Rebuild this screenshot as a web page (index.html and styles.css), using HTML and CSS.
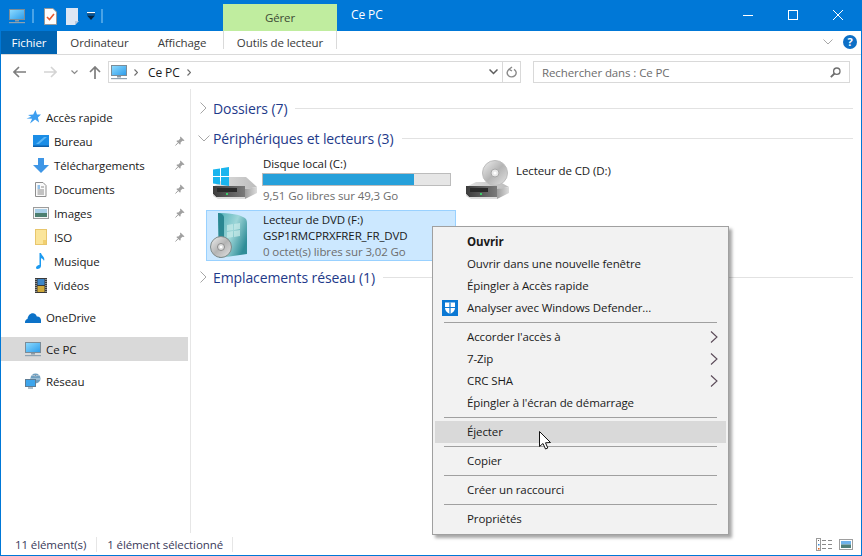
FILE: index.html
```html
<!DOCTYPE html>
<html lang="fr">
<head>
<meta charset="UTF-8">
<meta name="viewport" content="width=device-width, initial-scale=1.0">
<title>Ce PC</title>
<link rel="stylesheet" href="styles.css">
</head>
<body>

<!-- Shared icons -->
<svg class="defs" width="0" height="0">
  <defs>
    <linearGradient id="screen" x1="0" y1="0" x2="1" y2="1">
      <stop offset="0" stop-color="#8fdcff"/>
      <stop offset="1" stop-color="#2b9bea"/>
    </linearGradient>
    <linearGradient id="driveTop" x1="0" y1="0" x2="1" y2="0">
      <stop offset="0" stop-color="#e2e2e2"/>
      <stop offset="1" stop-color="#bcbcbc"/>
    </linearGradient>
    <linearGradient id="driveFront" x1="0" y1="0" x2="1" y2="0">
      <stop offset="0" stop-color="#3c3c3c"/>
      <stop offset="1" stop-color="#7a7a7a"/>
    </linearGradient>
    <linearGradient id="driveSide" x1="0" y1="0" x2="1" y2="0">
      <stop offset="0" stop-color="#9c9c9c"/>
      <stop offset="1" stop-color="#dcdcdc"/>
    </linearGradient>
    <linearGradient id="disc" x1="0" y1="0" x2="1" y2="1">
      <stop offset="0" stop-color="#f0f0f0"/>
      <stop offset="0.5" stop-color="#b4b4b4"/>
      <stop offset="1" stop-color="#e4e4e4"/>
    </linearGradient>
    <linearGradient id="box" x1="0" y1="0" x2="1" y2="0.6">
      <stop offset="0" stop-color="#4eaeb8"/>
      <stop offset="0.55" stop-color="#9ed6d8"/>
      <stop offset="1" stop-color="#2f8d98"/>
    </linearGradient>
    <symbol id="pc" viewBox="0 0 16 16">
      <rect x="0.5" y="1.5" width="15" height="10" fill="url(#screen)" stroke="#7b8c98"/>
      <rect x="6" y="12" width="4" height="1.5" fill="#8a9aa6"/>
      <rect x="0" y="14" width="16" height="1.2" fill="#8fa2b0"/>
    </symbol>
    <symbol id="pin" viewBox="0 0 10 10">
      <path d="M5.5 0.5 L9.5 4.5 L8.5 5 L7.5 4.7 L5.6 6.6 L5.6 8.2 L4.8 8.6 L1.5 5.2 L1.9 4.4 L3.4 4.4 L5.3 2.5 L5 1.5 Z" fill="#a0a0a0"/>
      <path d="M0.5 9.5 L3 6.8" stroke="#a0a0a0" fill="none"/>
    </symbol>
    <symbol id="menuArrow" viewBox="0 0 8 12">
      <path d="M1 0.5 L7 6 L1 11.5" fill="none" stroke="#5a4a58" stroke-width="1.1"/>
    </symbol>
  </defs>
</svg>

<div class="window">

  <!-- Title bar -->
  <div class="titlebar">
    <div class="qat">
      <svg width="16" height="16"><use href="#pc"/></svg>
      <span class="qat-sep"></span>
      <svg class="qat-props" width="13" height="17" viewBox="0 0 13 17">
        <path d="M0.5 0.5 H9 L12.5 4 V16.5 H0.5 Z" fill="#fdfdfd" stroke="#9a9a9a"/>
        <path d="M3 9 L5.5 11.5 L10 6" fill="none" stroke="#e8582c" stroke-width="1.6"/>
      </svg>
      <svg class="qat-page" width="13" height="17" viewBox="0 0 13 17">
        <path d="M0 0 H12 V13 L9 17 H0 Z" fill="#dce6f4"/>
        <path d="M9 17 V13 H13 Z" fill="#b9c8dc"/>
      </svg>
      <svg class="qat-more" width="8" height="9" viewBox="0 0 8 9">
        <rect x="0" y="0" width="8" height="1.4" fill="#fff"/>
        <rect x="0" y="1.4" width="8" height="1" fill="#06233f"/>
        <path d="M0 3.5 H8 L4 8 Z" fill="#06233f"/>
      </svg>
      <span class="qat-sep qat-sep-last"></span>
    </div>
    <div class="manage-tab">Gérer</div>
    <div class="window-title">Ce PC</div>
    <div class="window-buttons">
      <svg width="10" height="10" viewBox="0 0 10 10"><path d="M0 5.5 H10" stroke="#fff"/></svg>
      <svg width="10" height="10" viewBox="0 0 10 10"><rect x="0.5" y="0.5" width="9" height="9" fill="none" stroke="#fff"/></svg>
      <svg width="10" height="10" viewBox="0 0 10 10"><path d="M0 0 L10 10 M10 0 L0 10" stroke="#fff"/></svg>
    </div>
  </div>

  <!-- Ribbon tabs -->
  <div class="tabs">
    <div class="tab tab-file">Fichier</div>
    <div class="tab tab-comp">Ordinateur</div>
    <div class="tab tab-view">Affichage</div>
    <div class="tab tab-tools">Outils de lecteur</div>
    <div class="tabs-right">
      <svg width="10" height="6" viewBox="0 0 10 6"><path d="M0.5 0.5 L5 5 L9.5 0.5" fill="none" stroke="#a8a8a8"/></svg>
      <div class="help">?</div>
    </div>
  </div>

  <!-- Address bar -->
  <div class="addressrow">
    <svg class="nav-back" width="13" height="12" viewBox="0 0 13 12"><path d="M6 1 L1 6 L6 11 M1 6 H13" fill="none" stroke="#7d7d7d" stroke-width="1.6"/></svg>
    <svg class="nav-fwd" width="13" height="12" viewBox="0 0 13 12"><path d="M7 1 L12 6 L7 11 M12 6 H0" fill="none" stroke="#d4d4d4" stroke-width="1.6"/></svg>
    <svg class="nav-drop" width="7" height="5" viewBox="0 0 7 5"><path d="M0.5 0.5 L3.5 3.5 L6.5 0.5" fill="none" stroke="#8a8a8a" stroke-width="1.2"/></svg>
    <svg class="nav-up" width="12" height="13" viewBox="0 0 12 13"><path d="M1 6 L6 1 L11 6 M6 1 V13" fill="none" stroke="#7d7d7d" stroke-width="1.7"/></svg>
    <div class="address">
      <svg width="16" height="16"><use href="#pc"/></svg>
      <svg class="crumb" width="4" height="7" viewBox="0 0 4 7"><path d="M0.5 0.5 L3.5 3.5 L0.5 6.5" fill="none" stroke="#6e6e6e" stroke-width="1.2"/></svg>
      <span class="crumb-text">Ce PC</span>
      <svg class="crumb" width="4" height="7" viewBox="0 0 4 7"><path d="M0.5 0.5 L3.5 3.5 L0.5 6.5" fill="none" stroke="#6e6e6e" stroke-width="1.2"/></svg>
      <div class="address-end">
        <span class="address-drop">
          <svg width="9" height="6" viewBox="0 0 9 6"><path d="M0.5 0.5 L4.5 4.5 L8.5 0.5" fill="none" stroke="#5e5e5e" stroke-width="1.5"/></svg>
        </span>
        <span class="address-refresh">
          <svg width="11" height="12" viewBox="0 0 11 12"><path d="M3.5 2.5 A4.5 4.5 0 1 0 8 2.6 M6 0 L3 2.5 L6 4.5" fill="none" stroke="#8a8a8a" stroke-width="1.4" transform="translate(0 1) scale(1 0.9)"/></svg>
        </span>
      </div>
    </div>
    <div class="search">
      <span>Rechercher dans : Ce PC</span>
      <svg width="11" height="11" viewBox="0 0 11 11"><circle cx="6.8" cy="4.2" r="3.2" fill="none" stroke="#6e6e6e" stroke-width="1.3"/><path d="M4.5 6.5 L0.8 10.2" stroke="#6e6e6e" stroke-width="1.8"/></svg>
    </div>
  </div>

  <div class="main">

    <!-- Navigation pane -->
    <nav class="navpane">
      <div class="nav-item nav-top">
        <svg width="16" height="14" viewBox="-1.5 0 16 14"><path d="M9 0 L10.5 4.5 L14.5 4.6 L11.4 7.5 L12.6 12.5 L8.6 9.6 L3.5 13.5 L5.6 8.8 L0 8.6 L4.8 6.8 L1.5 5 L6.7 4.6 Z" fill="#3c9ef0"/></svg>
        <span>Accès rapide</span>
      </div>
      <div class="nav-item nav-sub">
        <svg width="16" height="12" viewBox="0 0 16 12"><rect width="16" height="12" fill="#1b8de6"/><path d="M3 9 L11 2 L14 2 L6 9 Z" fill="#5db7f5"/><rect y="10.5" width="16" height="1.5" fill="#0f5ea8"/></svg>
        <span>Bureau</span><svg class="pin" width="10" height="10"><use href="#pin"/></svg>
      </div>
      <div class="nav-item nav-sub">
        <svg width="16" height="15" viewBox="0 0 16 15"><path d="M5 0 H11 V7 H16 L8 15 L0 7 H5 Z" fill="#3e96e6"/></svg>
        <span>Téléchargements</span><svg class="pin" width="10" height="10"><use href="#pin"/></svg>
      </div>
      <div class="nav-item nav-sub">
        <svg width="16" height="15" viewBox="0 0 16 15"><path d="M2.5 0.5 H10 L13 3.5 V14.5 H2.5 Z" fill="#fafafa" stroke="#8e8e8e"/><path d="M4.5 4 H7 M4.5 6 H7" stroke="#2c88d8"/><path d="M8 5 H11 M4.5 8 H11 M4.5 10 H11 M4.5 12 H11" stroke="#8a8a8a"/></svg>
        <span>Documents</span><svg class="pin" width="10" height="10"><use href="#pin"/></svg>
      </div>
      <div class="nav-item nav-sub">
        <svg width="16" height="12" viewBox="0 0 16 12"><rect x="0.5" y="0.5" width="15" height="11" fill="#f6f6f6" stroke="#9c9c9c"/><rect x="2" y="2" width="12" height="4" fill="#a9cfe8"/><rect x="2" y="6" width="12" height="4" fill="#4d7f70"/></svg>
        <span>Images</span><svg class="pin" width="10" height="10"><use href="#pin"/></svg>
      </div>
      <div class="nav-item nav-sub">
        <svg width="16" height="16" viewBox="0 0 16 16"><rect x="2.5" y="0.5" width="11" height="15" fill="#fbe59a" stroke="#e8c66c"/><path d="M13 11 V15 H10 V11 Z" fill="#f1cf6f"/></svg>
        <span>ISO</span><svg class="pin" width="10" height="10"><use href="#pin"/></svg>
      </div>
      <div class="nav-item nav-sub">
        <svg width="16" height="16" viewBox="0 0 16 16"><path d="M6.5 0 H8 C8.5 3 12.5 4 11 8 C10.5 6.5 9.5 5.5 8 5.2 V13 C8 15 6 16 4.5 16 C3 16 2.8 14.8 3.2 14 C4 12.6 5.5 12 6.5 12 Z" fill="#1c9af0"/></svg>
        <span>Musique</span>
      </div>
      <div class="nav-item nav-sub">
        <svg width="16" height="15" viewBox="0 0 16 15"><rect x="2" y="0" width="12" height="15" fill="#3a3a3a"/><rect x="4.5" y="1" width="7" height="6" fill="#3d86c8"/><rect x="4.5" y="8" width="7" height="6" fill="#d0a93a"/><path d="M3 1 V14 M13 1 V14" stroke="#dddddd" stroke-dasharray="1 1"/></svg>
        <span>Vidéos</span>
      </div>
      <div class="nav-item nav-top nav-group">
        <svg width="16" height="11" viewBox="0 0 16 11"><path d="M0 11 C-0.3 8.5 1 7.5 2.5 7 C3 3 6 0.5 9 1.5 C11 2.2 11.5 3.5 11.8 4.5 C14 4.2 16 6 16 8 V11 Z" fill="#0c72c8"/></svg>
        <span>OneDrive</span>
      </div>
      <div class="nav-item nav-top nav-group nav-active">
        <svg width="16" height="16"><use href="#pc"/></svg>
        <span>Ce PC</span>
      </div>
      <div class="nav-item nav-top nav-group">
        <svg width="16" height="16" viewBox="0 0 16 16"><circle cx="10.5" cy="5.5" r="5" fill="#6f9fc0"/><path d="M7 2 C9 3 12 3 14 2 M6 6 H15" stroke="#c8dcea"/><rect x="0.5" y="6.5" width="10" height="7" fill="#3da5ec" stroke="#5d7c94"/><rect x="3" y="14.4" width="5" height="1.2" fill="#7d93a5"/></svg>
        <span>Réseau</span>
      </div>
    </nav>

    <!-- File list -->
    <section class="content">
      <div class="group-head">
        <svg width="7" height="12" viewBox="0 0 7 12"><path d="M0.5 0.5 L6 6 L0.5 11.5" fill="none" stroke="#a6a6a6"/></svg>
        <span>Dossiers (7)</span><i></i>
      </div>
      <div class="group-head">
        <svg class="open" width="12" height="7" viewBox="0 0 12 7"><path d="M0.5 0.5 L6 6 L11.5 0.5" fill="none" stroke="#a6a6a6"/></svg>
        <span>Périphériques et lecteurs (3)</span><i></i>
      </div>

      <div class="drives">
        <div class="drive">
          <svg class="drive-icon" width="46" height="40" viewBox="0 0 46 40">
            <path d="M1 27 L14 17 H34 L45 27 L33 29 H1 Z" fill="url(#driveTop)"/>
            <path d="M1 26 H33 V37 H4 L1 34 Z" fill="url(#driveFront)"/>
            <path d="M33 29 L45 27 V33 L33 39 Z" fill="url(#driveSide)"/>
            <path d="M1 34 L4 37 H33 V39 H6 L1 36 Z" fill="#dcdcdc"/>
            <rect x="5" y="28" width="20" height="4" fill="#2a2a2a"/>
            <rect x="14" y="33" width="2" height="2" fill="#3ad06a"/>
            <path d="M1 9.5 L8 8.5 V16 H1 Z M9 8.3 L17 7 V16 H9 Z M1 17 H8 V24.5 L1 23.5 Z M9 17 H17 V26 L9 24.7 Z" fill="#19b5ee"/>
          </svg>
          <div class="drive-text">
            <div>Disque local (C:)</div>
            <div class="bar"><div class="bar-fill" style="width:81%"></div></div>
            <div class="muted">9,51 Go libres sur 49,3 Go</div>
          </div>
        </div>

        <div class="drive">
          <svg class="drive-icon" width="46" height="40" viewBox="0 0 46 40">
            <path d="M0 27 L10 22 H34 L43 27 L33 29 H0 Z" fill="url(#driveTop)"/>
            <path d="M0 26 H31 V37 H3 L0 34 Z" fill="url(#driveFront)"/>
            <path d="M31 29 L43 27 V33 L31 39 Z" fill="url(#driveSide)"/>
            <path d="M0 34 L3 37 H31 V39 H5 L0 36 Z" fill="#dcdcdc"/>
            <rect x="4" y="28" width="18" height="4" fill="#2a2a2a"/>
            <rect x="14" y="33" width="2" height="2" fill="#3ad06a"/>
            <circle cx="29" cy="13" r="12.5" fill="url(#disc)" stroke="#bdbdbd"/>
            <circle cx="29" cy="13" r="4" fill="#e8e8e8" stroke="#a8a8a8"/>
            <circle cx="29" cy="13" r="1.5" fill="#fff"/>
          </svg>
          <div class="drive-text drive-single">Lecteur de CD (D:)</div>
        </div>

        <div class="drive drive-selected">
          <svg class="drive-icon drive-icon-dvd" width="46" height="49" viewBox="0 0 46 49">
            <path d="M8 2 C18 2 28 3 33 6 C36 7 37 9 37 12 V43 L9 47 Z" fill="url(#box)"/>
            <path d="M8 2 C11 2 13 3 14 6 V46 L9 47 Z" fill="#2a8792"/>
            <path d="M17 14 L23 13 V19 L17 20 Z M24 13 L30 12 V18 L24 19 Z M17 21 L23 20 V26 L17 27 Z M24 20 L30 19 V25 L24 26 Z" fill="#c5e9e8" opacity="0.75"/>
            <circle cx="11" cy="36" r="10.5" fill="url(#disc)" stroke="#7f8a8a"/>
            <circle cx="11" cy="36" r="3.5" fill="#dcdcdc" stroke="#8a8a8a"/>
            <circle cx="11" cy="36" r="1.3" fill="#fff"/>
          </svg>
          <div class="drive-text">
            <div>Lecteur de DVD (F:)</div>
            <div>GSP1RMCPRXFRER_FR_DVD</div>
            <div class="muted">0 octet(s) libres sur 3,02 Go</div>
          </div>
        </div>
      </div>

      <div class="group-head">
        <svg width="7" height="12" viewBox="0 0 7 12"><path d="M0.5 0.5 L6 6 L0.5 11.5" fill="none" stroke="#a6a6a6"/></svg>
        <span>Emplacements réseau (1)</span><i></i>
      </div>
    </section>
  </div>

  <!-- Status bar -->
  <div class="statusbar">
    <span class="status-count">11 élément(s)</span>
    <span class="status-sel">1 élément sélectionné</span>
    <div class="status-views">
      <svg width="16" height="13" viewBox="0 0 16 13">
        <rect x="0.5" y="0.5" width="4" height="12" fill="#fff" stroke="#9a9a9a"/>
        <rect x="2" y="2" width="1" height="1" fill="#666"/><rect x="2" y="6" width="1.5" height="1.5" fill="#3a8fe0"/><rect x="2" y="10" width="1.5" height="1.5" fill="#e0661c"/>
        <path d="M6 2.5 H10 M12 2.5 H16 M6 6.5 H10 M12 6.5 H16 M6 10.5 H10 M12 10.5 H16" stroke="#8a8a8a"/>
      </svg>
      <svg width="14" height="11" viewBox="0 0 14 11">
        <rect x="0.5" y="0.5" width="13" height="10" fill="#fff" stroke="#9e9e9e"/>
        <rect x="2" y="2" width="10" height="3.5" fill="#6fb3ea"/><rect x="2" y="5.5" width="10" height="3.5" fill="#4f7f78"/>
      </svg>
    </div>
  </div>
</div>

<!-- Context menu -->
<div class="menu">
  <div class="menu-item menu-default">Ouvrir</div>
  <div class="menu-item">Ouvrir dans une nouvelle fenêtre</div>
  <div class="menu-item">Épingler à Accès rapide</div>
  <div class="menu-item">
    <svg class="menu-icon" width="16" height="16" viewBox="0 0 16 16">
      <rect width="16" height="16" fill="#0a78d4"/>
      <path d="M3 2.5 H13 V8 C13 11 10.5 13 8 14 C5.5 13 3 11 3 8 Z" fill="#fff"/>
      <path d="M8 2.5 V14 M3 7.5 H13" stroke="#0a78d4" stroke-width="1.2"/>
    </svg>
    Analyser avec Windows Defender...
  </div>
  <div class="menu-sep"></div>
  <div class="menu-item">Accorder l'accès à<svg class="menu-arrow" width="8" height="12"><use href="#menuArrow"/></svg></div>
  <div class="menu-item">7-Zip<svg class="menu-arrow" width="8" height="12"><use href="#menuArrow"/></svg></div>
  <div class="menu-item">CRC SHA<svg class="menu-arrow" width="8" height="12"><use href="#menuArrow"/></svg></div>
  <div class="menu-item">Épingler à l'écran de démarrage</div>
  <div class="menu-sep"></div>
  <div class="menu-item menu-hover">Éjecter</div>
  <div class="menu-sep"></div>
  <div class="menu-item">Copier</div>
  <div class="menu-sep"></div>
  <div class="menu-item">Créer un raccourci</div>
  <div class="menu-sep"></div>
  <div class="menu-item">Propriétés</div>
</div>

<!-- Mouse cursor -->
<svg class="cursor" width="13" height="19" viewBox="0 0 13 19">
  <path d="M0.5 0.5 V15.5 L4 12.5 L6.5 18 L8.8 17 L6.5 11.8 L11.5 11.5 Z" fill="#fff" stroke="#111"/>
</svg>

</body>
</html>
```

FILE: styles.css
```css
* {
  box-sizing: border-box;
}
html, body {
  margin: 0;
  padding: 0;
  height: 100%;
  overflow: hidden;
}
body {
  position: relative;
  font-family: "Open Sans", sans-serif;
  font-size: 11.5px;
  letter-spacing: -0.1px;
  color: #1a1a1a;
  background: #fff;
}
.defs {
  position: absolute;
}

/* Window */
.window {
  display: flex;
  flex-direction: column;
  height: 100%;
  border: 1px solid #0078d7;
  border-top: none;
}

/* Title bar */
.titlebar {
  display: flex;
  height: 31px;
  margin: 0 -1px;
  background: #0078d7;
  flex-shrink: 0;
}
.qat {
  display: flex;
  align-items: center;
  width: 223px;
  padding: 1px 0 0 9px;
}
.qat-sep {
  width: 2px;
  height: 14px;
  background: #4aa3e6;
  margin-left: 7px;
}
.qat-sep-last {
  margin-left: 6px;
}
.qat-props {
  margin-left: 10px;
}
.qat-page {
  margin-left: 9px;
}
.qat-more {
  margin-left: 8px;
}
.manage-tab {
  width: 114px;
  margin-top: 4px;
  background: #c0ed9f;
  color: #3d4a35;
  text-align: center;
  line-height: 28px;
}
.window-title {
  margin-left: 14px;
  color: #fff;
  font-size: 12px;
  line-height: 30px;
}
.window-buttons {
  display: flex;
  align-items: center;
  gap: 35px;
  margin-left: auto;
  padding: 0 19px 1px 0;
}

/* Tabs */
.tabs {
  display: flex;
  height: 24px;
  flex-shrink: 0;
  border-bottom: 1px solid #dadada;
}
.tab {
  line-height: 23px;
  text-align: center;
  color: #3a3a3a;
}
.tab-file {
  width: 56px;
  height: 23px;
  background: #0063b1;
  color: #fff;
}
.tab-comp {
  width: 85px;
}
.tab-view {
  width: 81px;
  padding-right: 1px;
}
.tab-tools {
  width: 114px;
  height: 18px;
  border-left: 1px solid #dadada;
  border-right: 1px solid #dadada;
}
.tabs-right {
  display: flex;
  align-items: center;
  gap: 10px;
  margin-left: auto;
  padding: 0 4px 2px 0;
}
.help {
  width: 14px;
  height: 14px;
  border-radius: 50%;
  background: #0d6fc6;
  color: #fff;
  font-size: 11px;
  font-weight: 700;
  line-height: 14px;
  text-align: center;
}

/* Address row */
.addressrow {
  display: flex;
  align-items: center;
  height: 34px;
  flex-shrink: 0;
}
.nav-back {
  margin-left: 12px;
}
.nav-fwd {
  margin-left: 18px;
}
.nav-drop {
  margin-left: 14px;
}
.nav-up {
  margin-left: 11px;
}
.address {
  display: flex;
  align-items: center;
  width: 413px;
  height: 22px;
  margin-left: 7px;
  border: 1px solid #d9d9d9;
  padding-left: 2px;
}
.crumb {
  margin-left: 7px;
}
.crumb-text {
  margin-left: 10px;
  font-size: 12px;
}
.address-end {
  display: flex;
  height: 100%;
  margin-left: auto;
}
.address-drop {
  display: flex;
  align-items: center;
  justify-content: center;
  width: 18px;
  border-right: 1px solid #d9d9d9;
}
.address-refresh {
  display: flex;
  align-items: center;
  justify-content: center;
  width: 17px;
}
.search {
  display: flex;
  align-items: center;
  justify-content: space-between;
  width: 317px;
  height: 22px;
  margin-left: 12px;
  padding: 0 8px;
  border: 1px solid #d9d9d9;
  color: #6d6d6d;
}

/* Main area */
.main {
  display: flex;
  flex: 1;
  min-height: 0;
}
.navpane {
  width: 190px;
  padding: 16px 2px 0 0;
  border-right: 1px solid #e6e6e6;
  flex-shrink: 0;
}
.nav-item {
  display: flex;
  align-items: center;
  height: 24px;
}
.nav-top svg:first-child {
  margin-left: 24px;
}
.nav-sub svg:first-child {
  margin-left: 32px;
}
.nav-item span {
  margin-left: 5px;
}
.pin {
  margin-left: auto;
  margin-right: 3px;
}
.nav-group {
  margin-top: 8px;
}
.nav-active {
  background: #d9d9d9;
}

/* Content */
.content {
  flex: 1;
  min-width: 0;
  padding: 8px 0 0 8px;
}
.group-head {
  display: flex;
  align-items: center;
  height: 22px;
  margin-bottom: 8px;
  font-size: 14px;
  color: #1e3a8a;
}
.group-head svg {
  margin: 0 6px 0 1px;
}
.group-head svg.open {
  margin: 0 3px 0 -1px;
}
.group-head i {
  flex: 1;
  height: 1px;
  margin: 0 8px;
  background: #e2e2e2;
}
.drives {
  display: grid;
  grid-template-columns: 250px 250px;
  gap: 5px 4px;
  margin: -3px 0 5px 7px;
}
.drive {
  display: flex;
  align-items: center;
  height: 51px;
  padding-left: 5px;
  border: 1px solid transparent;
}
.drive-selected {
  background: #cce8ff;
  border-color: #99d1ff;
}
.drive-icon {
  flex-shrink: 0;
}
.drive-icon-dvd {
  margin: 0 2px 0 -2px;
}
.drive-text {
  flex: 1;
  margin-left: 5px;
  line-height: 16px;
  white-space: nowrap;
}
.drive-single {
  align-self: flex-start;
  margin: 8px 0 0 4px;
}
.muted {
  color: #6d6d6d;
}
.bar {
  height: 13px;
  margin: 1px 4px 2px -1px;
  background: #e6e6e6;
  border: 1px solid #bcbcbc;
}
.bar-fill {
  height: 100%;
  background: #26a0da;
}

/* Status bar */
.statusbar {
  display: flex;
  align-items: center;
  height: 22px;
  flex-shrink: 0;
  color: #3a3a5a;
}
.status-count {
  margin-left: 14px;
  padding-right: 10px;
  border-right: 1px solid #e6e6e6;
}
.status-sel {
  margin-left: 10px;
  padding-right: 9px;
  border-right: 1px solid #e6e6e6;
}
.status-views {
  display: flex;
  align-items: center;
  gap: 7px;
  margin-left: auto;
  padding-right: 8px;
}

/* Context menu */
.menu {
  position: absolute;
  left: 432px;
  top: 226px;
  width: 297px;
  height: 309px;
  padding: 4px 2px;
  background: #f2f2f2;
  border: 1px solid #a0a0a0;
  box-shadow: 3px 3px 3px rgba(0, 0, 0, 0.35);
}
.menu-item {
  position: relative;
  height: 22px;
  padding-left: 32px;
  line-height: 22px;
  white-space: nowrap;
}
.menu-default {
  font-weight: 700;
}
.menu-hover {
  background: #d9d9d9;
}
.menu-icon {
  position: absolute;
  left: 7px;
  top: 3px;
}
.menu-arrow {
  position: absolute;
  right: 8px;
  top: 5px;
}
.menu-sep {
  height: 1px;
  margin: 3px 9px;
  background: #a0a0a0;
}
.cursor {
  position: absolute;
  left: 539px;
  top: 431px;
}
```
